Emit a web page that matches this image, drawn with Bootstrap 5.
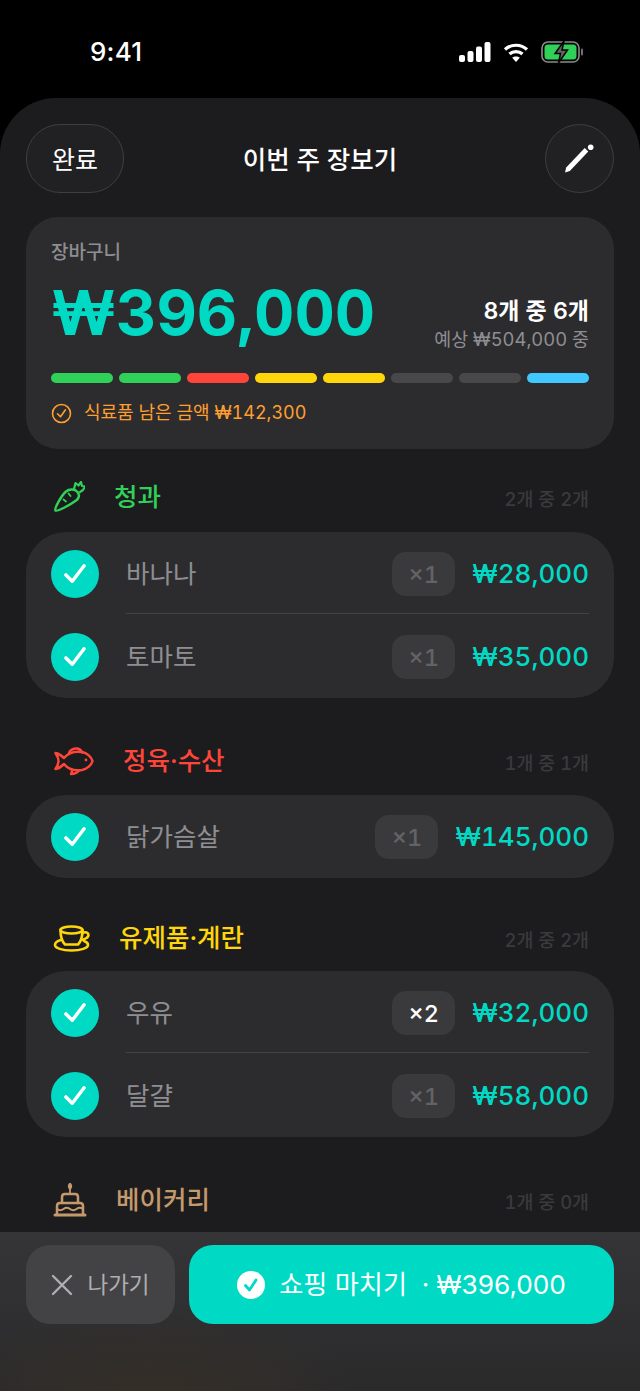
<!DOCTYPE html>
<html lang="ko">
<head>
    <meta charset="UTF-8">
    <meta name="viewport" content="width=device-width, initial-scale=1">
    <title>이번 주 장보기</title>

    <link rel="stylesheet" href="https://cdn.jsdelivr.net/npm/bootstrap@5.3.0/dist/css/bootstrap.min.css">

    <style>
        html, body { height: 1391px; overflow: hidden; background: #000; }
        body { font-family: Inter, "Noto Sans CJK KR", sans-serif; color: #fff; font-variant-numeric: tabular-nums; }

        /* Status bar */
        .status-bar { height: 98px; padding: 36px 56px 0 90px; }
        .status-time { font-size: 26px; font-weight: 500; line-height: 32px; letter-spacing: .2px; font-variant-numeric: normal; }
        .status-icons { gap: 12px; height: 32px; }

        /* Sheet */
        .sheet { height: 1293px; background: #1c1c1e; border-radius: 56px 56px 0 0; overflow: hidden; padding: 26px 26px 0; }
        .sheet-top { height: 69px; }
        .sheet-side { width: 98px; }
        .glass-btn { height: 69px; border-radius: 34px; border: 1px solid #3f3f41; background: #212123; color: #fff; font-size: 25px; padding: 4px 0 0; line-height: 1; }
        .glass-btn:hover { background: #212123; color: #fff; border-color: #3f3f41; }
        .btn-done { width: 98px; }
        .btn-edit { width: 69px; padding: 0; border-radius: 50%; }
        .sheet-title { font-size: 25.500px; font-weight: 500; padding-top: 4px; }

        /* Summary card */
        .summary { height: 232px; margin-top: 24px; background: #2c2c2e; border-radius: 32px; padding: 24px 25px 0; }
        .summary-label { font-size: 19px; font-weight: 500; line-height: 24px; color: #8e8e93; }
        .summary-row { height: 81px; margin-top: 7px; }
        .summary-total { font-size: 62.500px; font-weight: 700; line-height: 80px; color: #00dac5; }
        .summary-count { font-size: 23px; font-weight: 600; line-height: 28px; }
        .summary-budget { font-size: 18.400px; line-height: 28px; color: #8e8e93; }
        .seg-bar { margin-top: 20px; gap: 6px; }
        .seg { flex: 1; height: 10px; border-radius: 5px; background: #48484a; }
        .seg-green { background: #30d158; }
        .seg-red { background: #ff453a; }
        .seg-yellow { background: #ffd60a; }
        .seg-blue { background: #40c8ff; }
        .summary-note { margin-top: 18px; gap: 12px; font-size: 18px; line-height: 24px; color: #ff9f2e; }

        /* Category sections */
        .cat-head { height: 40px; padding: 0 25px 0 27px; gap: 29px; }
        .cat-name { font-size: 25.500px; font-weight: 500; line-height: 40px; }
        .cat-count { font-size: 18.400px; font-weight: 500; color: #3a3a3d; padding-top: 6px; }
        .cat-produce { margin-top: 28px; margin-bottom: 15px; color: #30d158; }
        .cat-meat { margin-top: 43px; margin-bottom: 14px; color: #ff453a; }
        .cat-dairy { margin-top: 40px; margin-bottom: 13px; color: #ffd60a; }
        .cat-bakery { margin-top: 43px; color: #c49a6c; }

        .item-group { background: #2c2c2e; border-radius: 40px; }
        .item-row { height: 83px; padding: 0 25px; }
        .item-check { width: 48px; height: 48px; border-radius: 50%; background: #00dac5; flex: none; }
        .item-main { height: 100%; margin-left: 27px; position: relative; }
        .item-row + .item-row .item-main::before { content: ""; position: absolute; left: 0; right: 0; top: -2px; height: 1px; background: #434345; }
        .item-name { font-size: 25.500px; color: #8e8e93; padding-top: 2px; }
        .item-qty { width: 63px; height: 44px; border-radius: 14px; background: #3a3a3c; color: #636366; font-size: 23.500px; font-weight: 500; padding-top: 3px; }
        .item-qty-on { color: #fff; }
        .item-price { font-size: 26px; font-weight: 500; color: #00dac5; margin-left: 17px; }

        /* Bottom action bar */
        .action-bar { position: absolute; left: 0; right: 0; bottom: 0; height: 159px; padding: 13px 26px 0; gap: 14px;
            background: radial-gradient(ellipse 220px 100px at 150px 175px, #372f27, transparent), linear-gradient(#353538, #2a2a2b); }
        .btn-leave { width: 149px; height: 79px; border-radius: 24px; background: #434346; color: #aeaeb2; font-size: 22.500px; gap: 14px; border: 0; }
        .btn-leave:hover { background: #434346; color: #aeaeb2; }
        .btn-finish { flex: 1; height: 79px; border-radius: 24px; background: #00dac5; color: #fff; font-size: 26.200px; gap: 14px; border: 0; }
        .btn-finish:hover { background: #00dac5; color: #fff; }
    </style>
</head>
<body>

<!-- Status bar -->
<div class="status-bar d-flex justify-content-between align-items-start">
    <span class="status-time">9:41</span>
    <div class="status-icons d-flex align-items-center">
        <svg width="32" height="20" viewBox="0 0 32 20" fill="#fff"><rect x="0" y="13" width="6" height="7" rx="2"/><rect x="8.500" y="9" width="6" height="11" rx="2"/><rect x="17" y="4.500" width="6" height="15.500" rx="2"/><rect x="25.500" y="0" width="6" height="20" rx="2"/></svg>
        <svg width="26" height="20" viewBox="0 0 26 20" fill="none" stroke="#fff" stroke-width="3.200"><path d="M2 7.500C8 1.800 18 1.800 24 7.500"/><path d="M6.500 12C10 8.800 16 8.800 19.500 12"/><path d="M13 20l-3.800-4.200c2-1.700 5.600-1.700 7.600 0z" fill="#fff" stroke="none"/></svg>
        <svg width="43" height="22" viewBox="0 0 43 22"><rect x="1" y="1" width="37" height="20" rx="6" fill="none" stroke="#8a8a8e" stroke-width="1.600"/><rect x="3.500" y="3.500" width="32" height="15" rx="3.500" fill="#30d158"/><rect x="40" y="7.500" width="2" height="7" rx="1" fill="#6f6f73"/><path d="M23 0l-9 12.500h5.500L17.500 22l9-13h-5.500z" fill="#636366" stroke="#000" stroke-width="1.500"/></svg>
    </div>
</div>

<div class="sheet position-relative">
    <!-- Header -->
    <div class="sheet-top d-flex align-items-center">
        <div class="sheet-side"><button class="btn glass-btn btn-done">완료</button></div>
        <span class="sheet-title flex-grow-1 text-center">이번 주 장보기</span>
        <div class="sheet-side d-flex justify-content-end">
            <button class="btn glass-btn btn-edit d-flex align-items-center justify-content-center">
                <svg width="30" height="30" viewBox="0 0 30 30" fill="#fff"><path d="M0 28.500l1.200-5L19.700 4l3.600 3.400L4.800 27z"/><circle cx="25.700" cy="3.300" r="2.800"/></svg>
            </button>
        </div>
    </div>

    <!-- Summary -->
    <div class="summary">
        <div class="summary-label">장바구니</div>
        <div class="summary-row d-flex justify-content-between align-items-end">
            <span class="summary-total align-self-start">₩396,000</span>
            <div class="text-end">
                <div class="summary-count">8개 중 6개</div>
                <div class="summary-budget">예상 ₩504,000 중</div>
            </div>
        </div>
        <div class="seg-bar d-flex">
            <div class="seg seg-green"></div>
            <div class="seg seg-green"></div>
            <div class="seg seg-red"></div>
            <div class="seg seg-yellow"></div>
            <div class="seg seg-yellow"></div>
            <div class="seg"></div>
            <div class="seg"></div>
            <div class="seg seg-blue"></div>
        </div>
        <div class="summary-note d-flex align-items-center">
            <svg width="21" height="21" viewBox="0 0 21 21" fill="none" stroke="#ff9f2e" stroke-width="1.600"><circle cx="10.500" cy="10.500" r="9"/><path d="M6.500 10.800l3 3 5-7" stroke-linecap="round" stroke-linejoin="round"/></svg>
            <span>식료품 남은 금액 ₩142,300</span>
        </div>
    </div>

    <!-- 청과 -->
    <div class="cat-head cat-produce d-flex align-items-center">
        <svg width="32" height="32" viewBox="0 0 32 32" fill="none" stroke="currentColor" stroke-width="2.500" stroke-linecap="round" stroke-linejoin="round"><path d="M2.500 29.500C1 28 8 15 13 10.500c3.500-3 9-2.500 11.500.5s1.500 6.500-1.500 8.500C17 24 4 31 2.500 29.500z"/><path d="M21 8l1.500-6 3 2.500L28 1l1 4 3 .5-2 3.500-3 2" stroke-width="2.200"/><path d="M15.500 12.500l2 2.500M10.500 18.500l2.500 2" stroke-width="1.800"/></svg>
        <span class="cat-name">청과</span>
        <span class="cat-count ms-auto">2개 중 2개</span>
    </div>
    <div class="item-group">
        <div class="item-row d-flex align-items-center">
            <div class="item-check d-flex align-items-center justify-content-center"><svg width="22" height="20" viewBox="0 0 24 22" fill="none" stroke="#fff" stroke-width="3.800" stroke-linecap="round" stroke-linejoin="round"><path d="M2 12l7 7L22 2"/></svg></div>
            <div class="item-main flex-grow-1 d-flex align-items-center"><span class="item-name me-auto">바나나</span><span class="item-qty d-flex align-items-center justify-content-center">×1</span><span class="item-price">₩28,000</span></div>
        </div>
        <div class="item-row d-flex align-items-center">
            <div class="item-check d-flex align-items-center justify-content-center"><svg width="22" height="20" viewBox="0 0 24 22" fill="none" stroke="#fff" stroke-width="3.800" stroke-linecap="round" stroke-linejoin="round"><path d="M2 12l7 7L22 2"/></svg></div>
            <div class="item-main flex-grow-1 d-flex align-items-center"><span class="item-name me-auto">토마토</span><span class="item-qty d-flex align-items-center justify-content-center">×1</span><span class="item-price">₩35,000</span></div>
        </div>
    </div>

    <!-- 정육·수산 -->
    <div class="cat-head cat-meat d-flex align-items-center">
        <svg width="41" height="30" viewBox="-1 0 41 30" fill="none" stroke="currentColor" stroke-width="2.500" stroke-linecap="round" stroke-linejoin="round"><path d="M1.500 7c3 .5 6 2.500 8.500 5 4-5 11-7 18-6 5 1 9.500 5 10.500 9-1 4-5.500 8-10.500 9-7 1-14-1-18-6-2.500 2.500-5.500 4.500-8.500 5 2-3 3-5.500 3-8s-1-5-3-8z"/><path d="M15 7c1-3 5-5 8.500-4.500 2 .5 4 2 4.500 4"/><path d="M18 24c0 2 0 3-1 4 3 0 6-1 8-3.500"/><circle cx="32" cy="14" r="1.400" fill="currentColor" stroke="none"/></svg>
        <span class="cat-name">정육·수산</span>
        <span class="cat-count ms-auto">1개 중 1개</span>
    </div>
    <div class="item-group">
        <div class="item-row d-flex align-items-center">
            <div class="item-check d-flex align-items-center justify-content-center"><svg width="22" height="20" viewBox="0 0 24 22" fill="none" stroke="#fff" stroke-width="3.800" stroke-linecap="round" stroke-linejoin="round"><path d="M2 12l7 7L22 2"/></svg></div>
            <div class="item-main flex-grow-1 d-flex align-items-center"><span class="item-name me-auto">닭가슴살</span><span class="item-qty d-flex align-items-center justify-content-center">×1</span><span class="item-price">₩145,000</span></div>
        </div>
    </div>

    <!-- 유제품·계란 -->
    <div class="cat-head cat-dairy d-flex align-items-center">
        <svg width="37" height="27" viewBox="0 0 37 27" fill="none" stroke="currentColor" stroke-width="2.600" stroke-linecap="round" stroke-linejoin="round"><ellipse cx="18.500" cy="5" rx="11" ry="3.500"/><path d="M7.500 5c0 6 1 11 4.500 14.500h13C28.500 16 29.500 11 29.500 5"/><path d="M29.500 8c3-1.500 6-.5 6 2s-3 4-7 5"/><path d="M8 15c-4 1-6 3-6 5 0 3 7 5.500 16.500 5.500S35 23 35 20c0-1.500-1-3-4-4"/></svg>
        <span class="cat-name">유제품·계란</span>
        <span class="cat-count ms-auto">2개 중 2개</span>
    </div>
    <div class="item-group">
        <div class="item-row d-flex align-items-center">
            <div class="item-check d-flex align-items-center justify-content-center"><svg width="22" height="20" viewBox="0 0 24 22" fill="none" stroke="#fff" stroke-width="3.800" stroke-linecap="round" stroke-linejoin="round"><path d="M2 12l7 7L22 2"/></svg></div>
            <div class="item-main flex-grow-1 d-flex align-items-center"><span class="item-name me-auto">우유</span><span class="item-qty item-qty-on d-flex align-items-center justify-content-center">×2</span><span class="item-price">₩32,000</span></div>
        </div>
        <div class="item-row d-flex align-items-center">
            <div class="item-check d-flex align-items-center justify-content-center"><svg width="22" height="20" viewBox="0 0 24 22" fill="none" stroke="#fff" stroke-width="3.800" stroke-linecap="round" stroke-linejoin="round"><path d="M2 12l7 7L22 2"/></svg></div>
            <div class="item-main flex-grow-1 d-flex align-items-center"><span class="item-name me-auto">달걀</span><span class="item-qty d-flex align-items-center justify-content-center">×1</span><span class="item-price">₩58,000</span></div>
        </div>
    </div>

    <!-- 베이커리 -->
    <div class="cat-head cat-bakery d-flex align-items-center">
        <svg width="34" height="34" viewBox="0 0 34 34" fill="none" stroke="currentColor" stroke-width="2.500" stroke-linecap="round" stroke-linejoin="round"><path d="M17 1c-1.200 1.500-1.200 3 0 4.500 1.200-1.500 1.200-3 0-4.500z" fill="currentColor"/><path d="M17 6v5" stroke-width="1.800"/><path d="M9 20v-6c0-1.800 1-3 3-3h10c2 0 3 1.200 3 3v6"/><path d="M4 31V23c0-2 1-3 3-3h20c2 0 3 1 3 3v8"/><path d="M4 26c2 1.500 4.500 1.500 6.500 0s4.500-1.500 6.500 0 4.500 1.500 6.500 0 4.500-1.500 6.500 0" stroke-width="2"/><path d="M2 32h30" stroke-width="3"/></svg>
        <span class="cat-name">베이커리</span>
        <span class="cat-count ms-auto">1개 중 0개</span>
    </div>

    <!-- Bottom actions -->
    <div class="action-bar d-flex align-items-start">
        <button class="btn btn-leave d-flex align-items-center justify-content-center">
            <svg width="22" height="22" viewBox="0 0 22 22" fill="none" stroke="#aeaeb2" stroke-width="2.400" stroke-linecap="round"><path d="M2 2l18 18M20 2L2 20"/></svg>
            <span>나가기</span>
        </button>
        <button class="btn btn-finish d-flex align-items-center justify-content-center">
            <svg width="28" height="28" viewBox="0 0 28 28"><circle cx="14" cy="14" r="14" fill="#fff"/><path d="M8.500 14.500l4 4.500 6.500-10" fill="none" stroke="#00dac5" stroke-width="2.800" stroke-linecap="round" stroke-linejoin="round"/></svg>
            <span>쇼핑 마치기 &nbsp;· ₩396,000</span>
        </button>
    </div>
</div>

<script src="https://cdn.jsdelivr.net/npm/bootstrap@5.3.0/dist/js/bootstrap.bundle.min.js"></script>
</body>
</html>
